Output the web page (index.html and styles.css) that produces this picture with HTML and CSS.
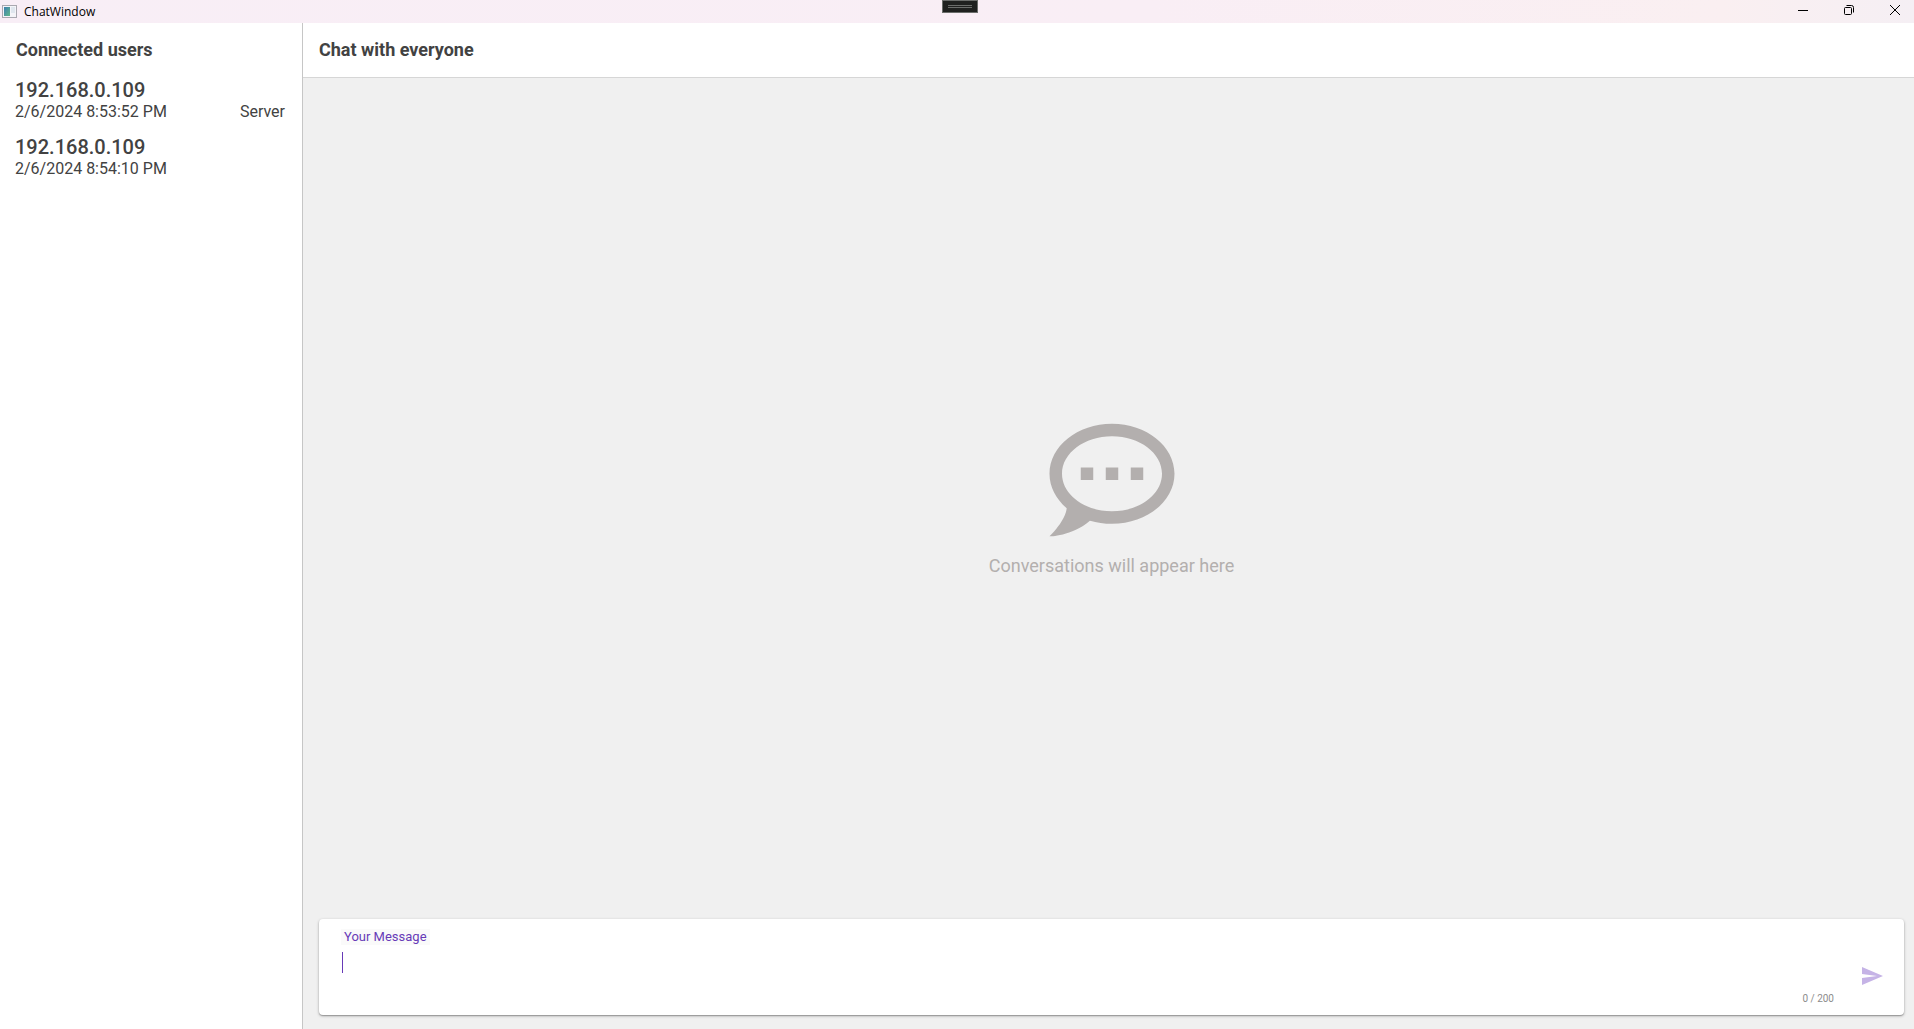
FILE: index.html
```html
<!DOCTYPE html>
<html lang="en">
<head>
<meta charset="utf-8">
<meta name="viewport" content="width=device-width, initial-scale=1">
<title>ChatWindow</title>
<link rel="stylesheet" href="styles.css">
</head>
<body>
<div class="window">
  <header class="titlebar">
    <svg class="app-icon" width="15" height="13" viewBox="0 0 15 13" aria-hidden="true">
      <defs>
        <linearGradient id="pane" x1="0" y1="0" x2="1" y2="1">
          <stop offset="0" stop-color="#3f7fb0"/>
          <stop offset="1" stop-color="#5fb98a"/>
        </linearGradient>
      </defs>
      <rect x=".5" y=".5" width="14" height="12" fill="#f4f4f8" stroke="#a9a8b0"/>
      <rect x="2" y="2" width="6" height="9" fill="url(#pane)"/>
      <rect x="9" y="2" width="4" height="6" fill="#dfe6ee"/>
    </svg>
    <span class="titlebar-text">ChatWindow</span>
    <button class="debug-handle" type="button" aria-label="Toolbar"></button>
    <div class="window-controls">
      <button type="button" aria-label="Minimize">
        <svg width="12" height="12" viewBox="0 0 12 12"><path d="M1 6.500H11" stroke="#000"/></svg>
      </button>
      <button type="button" aria-label="Restore">
        <svg width="12" height="12" viewBox="0 0 12 12" fill="none" stroke="#000"><rect x="1.500" y="3.500" width="7" height="7" rx="1"/><path d="M3.500 1.500H8.500a2 2 0 0 1 2 2V8.500"/></svg>
      </button>
      <button type="button" aria-label="Close">
        <svg width="12" height="12" viewBox="0 0 12 12"><path d="M1 1L11 11M11 1L1 11" stroke="#000"/></svg>
      </button>
    </div>
  </header>

  <div class="content">
    <aside class="sidebar">
      <h2 class="heading">Connected users</h2>
      <ul class="users">
        <li class="user">
          <div class="user-address">192.168.0.109</div>
          <div class="user-meta"><span>2/6/2024 8:53:52 PM</span><span>Server</span></div>
        </li>
        <li class="user">
          <div class="user-address">192.168.0.109</div>
          <div class="user-meta"><span>2/6/2024 8:54:10 PM</span></div>
        </li>
      </ul>
    </aside>

    <main class="chat">
      <div class="chat-header"><h1 class="heading">Chat with everyone</h1></div>
      <div class="chat-body">
        <section class="empty">
          <svg class="empty-icon" viewBox="0 0 24 24" aria-hidden="true">
            <path fill-rule="evenodd" d="M12 3C17.500 3 22 6.580 22 11C22 15.420 17.500 19 12 19C10.760 19 9.570 18.820 8.470 18.500C5.550 21 2 21 2 21C4.330 18.670 4.700 17.100 4.750 16.500C3.050 15.070 2 13.130 2 11C2 6.580 6.500 3 12 3ZM12 5C7.580 5 4 7.690 4 11C4 14.310 7.580 17 12 17C16.420 17 20 14.310 20 11C20 7.690 16.420 5 12 5ZM7 10H9V12H7ZM11 10H13V12H11ZM15 10H17V12H15Z"/>
          </svg>
          <p class="empty-text">Conversations will appear here</p>
        </section>
        <form class="composer">
          <div class="field">
            <label class="field-label" for="message">Your Message</label>
            <div class="field-input">
              <textarea id="message" rows="1" maxlength="200"></textarea>
              <span class="caret"></span>
            </div>
            <div class="counter">0 / 200</div>
          </div>
          <button class="send" type="button" aria-label="Send">
            <svg width="24" height="24" viewBox="0 0 24 24"><path d="M2 21L23 12L2 3V10L17 12L2 14V21Z"/></svg>
          </button>
        </form>
      </div>
    </main>
  </div>
</div>
</body>
</html>
```
FILE: styles.css
```css
* {
  box-sizing: border-box;
}

body {
  margin: 0;
  font-family: Roboto, sans-serif;
  color: #424242;
}

button {
  padding: 0;
  border: 0;
  background: none;
}

svg {
  display: block;
}

.window {
  display: flex;
  flex-direction: column;
  min-height: 100vh;
}

.titlebar {
  position: relative;
  display: flex;
  align-items: center;
  height: 23px;
  padding-left: 2px;
  background: linear-gradient(90deg, #f8eef6 0%, #f9eef5 60%, #faeff1 90%, #f5eff4 100%);
}

.titlebar-text {
  margin-left: 7px;
  font-family: "Open Sans", "Noto Sans", sans-serif;
  font-size: 12px;
  line-height: 16px;
  color: #000;
}

.debug-handle {
  position: absolute;
  top: 0;
  left: 942px;
  width: 36px;
  height: 13px;
  border: 1px solid #6a6d6a;
  background: linear-gradient(#6a6d6a, #6a6d6a) 5px 4px / 24px 1px no-repeat,
    linear-gradient(#6a6d6a, #6a6d6a) 5px 6px / 24px 1px no-repeat, #1f211f;
}

.window-controls {
  display: flex;
  align-self: flex-start;
  margin-left: auto;
}

.window-controls button {
  display: flex;
  align-items: center;
  justify-content: flex-end;
  width: 46px;
  height: 20px;
  padding-right: 13px;
}

.content {
  display: flex;
  flex: 1;
}

.sidebar {
  width: 303px;
  border-right: 1px solid #c6c6c6;
  background: #fff;
}

.heading {
  margin: 0;
  padding: 16px;
  font-size: 18px;
  font-weight: 700;
  line-height: 22px;
}

.users {
  margin: 0;
  padding: 1px 0;
  list-style: none;
}

.user {
  height: 57px;
  padding: 0 17px 0 15px;
}

.user-address {
  font-size: 20px;
  font-weight: 500;
  line-height: 24px;
}

.user-meta {
  display: flex;
  justify-content: space-between;
  font-size: 16px;
  line-height: 20px;
}

.chat {
  display: flex;
  flex: 1;
  flex-direction: column;
  background: #f0f0f0;
}

.chat-header {
  border-bottom: 1px solid #d6d6d6;
  background: #fff;
}

.chat-body {
  display: flex;
  flex: 1;
  flex-direction: column;
  gap: 16px;
  padding: 0 10px 14px 16px;
}

.empty {
  display: flex;
  flex: 1;
  flex-direction: column;
  align-items: center;
  justify-content: center;
  color: #b3afae;
}

.empty-icon {
  width: 150px;
  height: 150px;
  fill: currentColor;
}

.empty-text {
  margin: 0;
  font-size: 18px;
  line-height: 22px;
}

.composer {
  display: flex;
  align-items: center;
  height: 96px;
  padding: 9px 20px 7px 22px;
  border-radius: 4px;
  background: #fff;
  box-shadow: 0 1px 3px rgba(0, 0, 0, 0.3), 0 1px 1px rgba(0, 0, 0, 0.2);
}

.field {
  display: flex;
  flex: 1;
  flex-direction: column;
  align-items: flex-start;
}

.field-label {
  padding: 0 3px;
  font-size: 13px;
  line-height: 16px;
  color: #673ab7;
  background: #fafafa;
}

.field-input {
  position: relative;
  align-self: stretch;
  height: 38px;
  padding-top: 7px;
}

.field-input textarea {
  display: block;
  width: 100%;
  height: 22px;
  padding: 0 2px;
  border: 0;
  outline: 0;
  resize: none;
  overflow: hidden;
  font: 18px/22px Roboto, sans-serif;
  color: #424242;
  background: none;
}

.caret {
  position: absolute;
  top: 7px;
  left: 1px;
  width: 1px;
  height: 21px;
  background: #673ab7;
}

.counter {
  align-self: flex-end;
  margin-top: 8px;
  margin-right: 26px;
  font-size: 10px;
  line-height: 16px;
  color: #8c8c8c;
}

.send svg {
  fill: #c5b3e6;
}

.send {
  margin-top: 15px;
}
```
